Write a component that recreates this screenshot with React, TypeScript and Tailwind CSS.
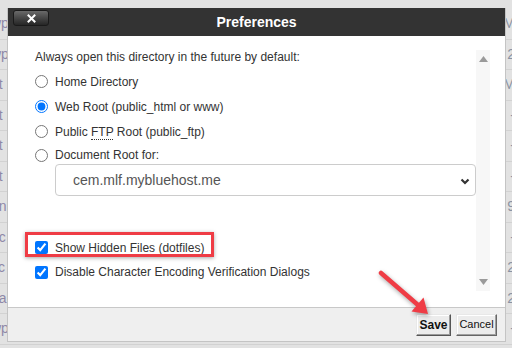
import React from 'react';

const bgRows = [
  { l: 'wp', r: 'M' },
  { l: 'wp', r: '2' },
  { l: 'nt', r: 'M' },
  { l: 'nt', r: '-' },
  { l: 'nt', r: '-' },
  { l: 'nt', r: '-' },
  { l: 'en', r: '9' },
  { l: 'nc', r: '-' },
  { l: 'sc', r: '2' },
  { l: 'ea', r: '2' },
  { l: 'wp', r: '-' },
];

const radios = [
  { label: 'Home Directory', checked: false },
  { label: 'Web Root (public_html or www)', checked: true },
  { label: 'ftp', checked: false },
];

const App = () => {
  return (
    <div
      className="relative w-[512px] h-[348px] overflow-hidden bg-[#e2e2e2]"
      style={{ fontFamily: '"Liberation Sans", Arial, sans-serif' }}
    >
      {/* page behind the modal */}
      <div className="flex flex-col pt-[9px]">
        {bgRows.map((row, i) => (
          <div key={i} className="flex h-[30.5px] items-center justify-between border-b border-[#d2d2d2] text-[14px]">
            <span className="-ml-[9px] text-[#8e88a8]">{row.l}</span>
            <span className="mr-[-3px] text-[#8a93a3]">{row.r}</span>
          </div>
        ))}
      </div>

      {/* dialog */}
      <div className="absolute left-[7px] top-[8px] w-[499px] h-[334px] flex flex-col bg-[#efefef] border-x border-b border-[#c4c4c4]">
        <div className="relative h-[28px] shrink-0 bg-[#333333] flex items-center justify-center">
          <button className="absolute left-[5px] top-[2px] w-[36px] h-[16px] rounded-[3px] border border-[#1a1a1a] bg-gradient-to-b from-[#6a6a6a] to-[#262626] flex items-center justify-center">
            <svg width="9" height="9" viewBox="0 0 9 9">
              <path d="M1.5 1.5 L7.5 7.5 M7.5 1.5 L1.5 7.5" stroke="#fff" strokeWidth="2" strokeLinecap="square" />
            </svg>
          </button>
          <span className="text-white text-[14px] font-bold">Preferences</span>
        </div>

        <div className="flex h-[272px] shrink-0 bg-white border-b border-[#c8c8c8]">
          <div className="flex-1 pl-[27px] pt-[13px] text-[12px] text-[#333]">
            <div className="h-[16px] leading-[16px]">Always open this directory in the future by default:</div>
            <div className="mt-[4px] flex flex-col">
              {radios.map((r, i) => (
                <label key={i} className="flex h-[25px] items-center gap-[7px]">
                  <input type="radio" name="dir" defaultChecked={r.checked} className="m-0 w-[13px] h-[13px] accent-[#0075ff]" />
                  {r.label === 'ftp' ? (
                    <span>
                      Public <abbr className="no-underline border-b border-dotted border-[#333]">FTP</abbr> Root (public_ftp)
                    </span>
                  ) : (
                    <span>{r.label}</span>
                  )}
                </label>
              ))}
              <label className="flex h-[22px] items-center gap-[7px]">
                <input type="radio" name="dir" className="m-0 w-[13px] h-[13px] accent-[#0075ff]" />
                <span>Document Root for:</span>
              </label>
            </div>
            <div className="relative ml-[20px] mt-[-2px] w-[421px] h-[32px] rounded-[4px] border border-[#cccccc] flex items-center pl-[17px] text-[14px] text-[#555]">
              cem.mlf.mybluehost.me
              <svg className="absolute right-[5px] top-[13px]" width="10" height="7" viewBox="0 0 10 7">
                <path d="M1.5 1.5 L5 5 L8.5 1.5" stroke="#333" strokeWidth="2.2" fill="none" />
              </svg>
            </div>
            <div className="mt-[39px] flex flex-col">
              <label className="flex h-[25px] items-center gap-[7px]">
                <input type="checkbox" defaultChecked className="m-0 w-[13px] h-[13px] accent-[#0075ff]" />
                <span>Show Hidden Files (dotfiles)</span>
              </label>
              <label className="flex h-[24px] items-center gap-[7px]">
                <input type="checkbox" defaultChecked className="m-0 w-[13px] h-[13px] accent-[#0075ff]" />
                <span>Disable Character Encoding Verification Dialogs</span>
              </label>
            </div>
          </div>
          <div className="w-[14px] mt-[14px] mb-[16px] mr-[15px] bg-[#f7f7f7] flex flex-col items-center justify-between py-[6px]">
            <svg width="9" height="6" viewBox="0 0 9 6">
              <path d="M0 6 L4.5 0 L9 6 Z" fill="#9a9a9a" />
            </svg>
            <svg width="9" height="6" viewBox="0 0 9 6">
              <path d="M0 0 L4.5 6 L9 0 Z" fill="#9a9a9a" />
            </svg>
          </div>
        </div>

        <div className="flex-1 flex items-center justify-end gap-[5px] pr-[8px]">
          <button className="h-[22px] w-[35px] border border-t-[#e8e8e8] border-l-[#e8e8e8] border-r-[#555] border-b-[#555] bg-[#ececec] text-[12px] font-bold text-[#111] shadow-[inset_-1px_-1px_0_#9a9a9a,inset_1px_1px_0_#fff]">
            Save
          </button>
          <button className="h-[22px] w-[41px] border border-t-[#e8e8e8] border-l-[#e8e8e8] border-r-[#666] border-b-[#666] bg-[#ececec] text-[11px] text-[#111] shadow-[inset_-1px_-1px_0_#a0a0a0,inset_1px_1px_0_#fff]">
            Cancel
          </button>
        </div>
      </div>

      {/* annotation */}
      <div className="absolute left-[25px] top-[232px] w-[189px] h-[25px] border-[3px] border-[#ef3c45] shadow-[0_1px_4px_rgba(0,0,0,0.35)] pointer-events-none" />
      <svg className="absolute left-0 top-0 pointer-events-none" width="512" height="348" viewBox="0 0 512 348" style={{ filter: 'drop-shadow(1px 2px 2px rgba(0,0,0,0.35))' }}>
        <line x1="381" y1="273" x2="418" y2="305" stroke="#ef3c45" strokeWidth="4.5" strokeLinecap="round" />
        <polygon points="428,314 411.5,311.5 423.5,297.5" fill="#ef3c45" />
      </svg>
    </div>
  );
};

export default App;
